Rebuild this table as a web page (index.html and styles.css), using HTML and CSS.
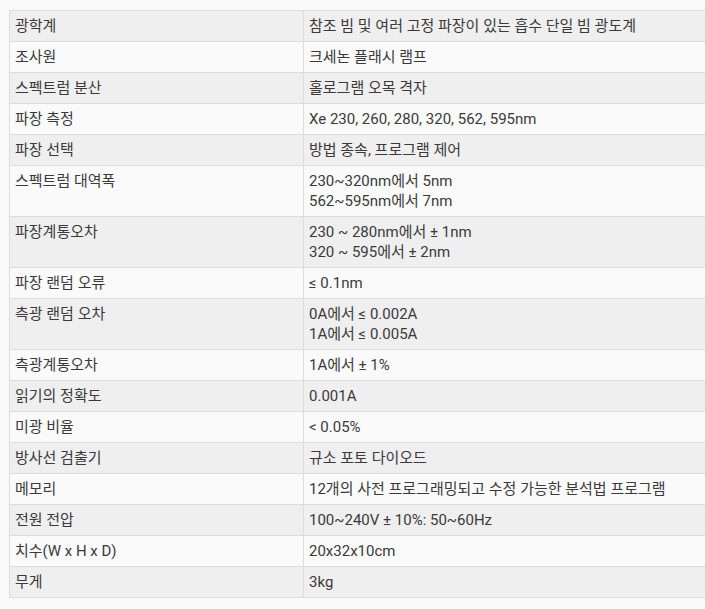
FILE: index.html
```html
<!DOCTYPE html>
<html lang="ko">
<head>
<meta charset="utf-8">
<link rel="stylesheet" href="styles.css">
</head>
<body>
<div class="wrap">
<table class="spec">
<colgroup><col class="c1"><col class="c2"></colgroup>
<tbody>
<tr><td>광학계</td><td>참조 빔 및 여러 고정 파장이 있는 흡수 단일 빔 광도계</td></tr>
<tr><td>조사원</td><td>크세논 플래시 램프</td></tr>
<tr><td>스펙트럼 분산</td><td>홀로그램 오목 격자</td></tr>
<tr><td>파장 측정</td><td>Xe 230, 260, 280, 320, 562, 595nm</td></tr>
<tr><td>파장 선택</td><td>방법 종속, 프로그램 제어</td></tr>
<tr><td>스펙트럼 대역폭</td><td>230~320nm에서 5nm<br>562~595nm에서 7nm</td></tr>
<tr><td>파장계통오차</td><td>230 ~ 280nm에서 ± 1nm<br>320 ~ 595에서 ± 2nm</td></tr>
<tr><td>파장 랜덤 오류</td><td>≤ 0.1nm</td></tr>
<tr><td>측광 랜덤 오차</td><td>0A에서 ≤ 0.002A<br>1A에서 ≤ 0.005A</td></tr>
<tr><td>측광계통오차</td><td>1A에서 ± 1%</td></tr>
<tr><td>읽기의 정확도</td><td>0.001A</td></tr>
<tr><td>미광 비율</td><td>&lt; 0.05%</td></tr>
<tr><td>방사선 검출기</td><td>규소 포토 다이오드</td></tr>
<tr><td>메모리</td><td>12개의 사전 프로그래밍되고 수정 가능한 분석법 프로그램</td></tr>
<tr><td>전원 전압</td><td>100~240V ± 10%: 50~60Hz</td></tr>
<tr><td>치수(W x H x D)</td><td>20x32x10cm</td></tr>
<tr><td>무게</td><td>3kg</td></tr>
</tbody>
</table>
</div>
</body>
</html>
```

FILE: styles.css
```css
html, body {
  margin: 0;
  padding: 0;
  background: #fafafa;
  overflow: hidden;
}
.wrap {
  padding: 10px 0 0 9px;
  overflow: hidden;
}
.spec {
  border-collapse: collapse;
  width: 800px;
  table-layout: fixed;
  font-family: Roboto, "Noto Sans CJK KR", sans-serif;
  font-size: 15px;
  line-height: 20px;
  color: #3a3a3a;
}
.c1 { width: 294px; }
.c2 { width: 506px; }
.spec td {
  border: 1px solid #dcdcdc;
  padding: 5px 5px;
  vertical-align: top;
  white-space: nowrap;
}
.spec tr:nth-child(odd) td {
  background: #efefef;
}
.spec tr:nth-child(even) td {
  background: #fafafa;
}
```
